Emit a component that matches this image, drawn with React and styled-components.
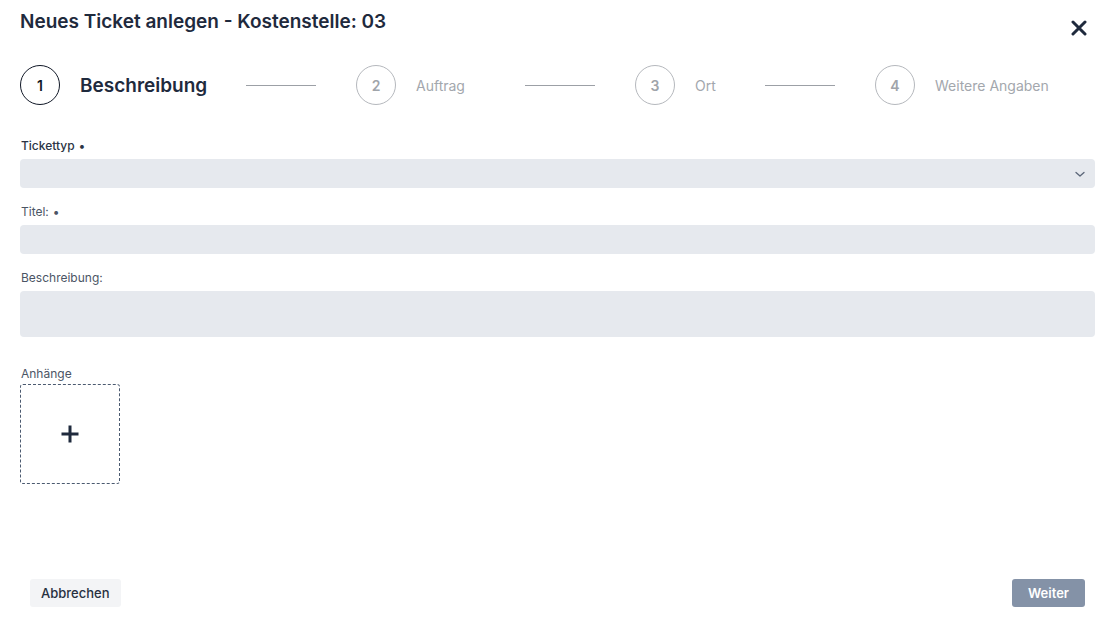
import React from "react";
import styled, { createGlobalStyle } from "styled-components";

const GlobalStyle = createGlobalStyle`
  html, body {
    margin: 0;
    padding: 0;
    background: #ffffff;
    font-family: Inter, "Noto Sans", "Liberation Sans", sans-serif;
  }
  * { box-sizing: border-box; }
`;

const Page = styled.div`
  display: flex;
  flex-direction: column;
  height: 624px;
  padding: 0 20px 17px 20px;
`;

const Header = styled.div`
  display: flex;
  justify-content: space-between;
  align-items: flex-start;
  padding-top: 10px;
`;

const Title = styled.h1`
  margin: 0;
  font-size: 19px;
  line-height: 24px;
  font-weight: 600;
  color: #1f2a3d;
`;

const CloseButton = styled.button`
  border: none;
  background: none;
  padding: 0;
  margin: 10px 8px 0 0;
  width: 16px;
  height: 16px;
  cursor: pointer;
  display: flex;
`;

const Stepper = styled.div`
  display: flex;
  align-items: center;
  margin-top: 29px;
  height: 40px;
`;

const Step = styled.div`
  display: flex;
  align-items: center;
  gap: 20px;
`;

const Circle = styled.div`
  width: 40px;
  height: 40px;
  border-radius: 50%;
  border: 1px solid ${(p) => (p.active ? "#111827" : "#b5b8bd")};
  color: ${(p) => (p.active ? "#111827" : "#a0a4aa")};
  display: flex;
  align-items: center;
  justify-content: center;
  font-size: 14px;
  font-weight: 600;
  flex-shrink: 0;
`;

const StepLabel = styled.span`
  width: ${(p) => p.w}px;
  font-size: ${(p) => (p.active ? "19px" : "14px")};
  font-weight: ${(p) => (p.active ? 600 : 400)};
  color: ${(p) => (p.active ? "#1f2a3d" : "#a3a7ad")};
  white-space: nowrap;
`;

const Connector = styled.div`
  width: 70px;
  height: 1px;
  background: #9ca0a6;
  margin: 0 40px;
`;

const Form = styled.div`
  display: flex;
  flex-direction: column;
  margin-top: 33px;
`;

const Field = styled.div`
  display: flex;
  flex-direction: column;
  gap: ${(p) => p.gap ?? 5}px;
  margin-bottom: ${(p) => p.mb || 16}px;
`;

const Label = styled.label`
  font-size: 12px;
  line-height: 16px;
  font-weight: ${(p) => (p.strong ? 500 : 400)};
  color: ${(p) => (p.strong ? "#2b3445" : "#4b5565")};
  padding-left: 1px;
`;

const Req = styled.span`
  margin-left: 4px;
`;

const Input = styled.div`
  position: relative;
  height: ${(p) => p.h || 29}px;
  background: #e6e9ee;
  border-radius: 4px;
`;

const Chevron = styled.svg`
  position: absolute;
  right: 9px;
  top: 9px;
`;

const Dropzone = styled.div`
  width: 100px;
  height: 100px;
  border: 1px dashed #4b5a70;
  border-radius: 3px;
  display: flex;
  align-items: center;
  justify-content: center;
  cursor: pointer;
`;

const Footer = styled.div`
  margin-top: auto;
  display: flex;
  justify-content: space-between;
  padding: 0 10px;
`;

const Button = styled.button`
  height: 28px;
  padding: 0 ${(p) => (p.primary ? 16 : 11)}px;
  border: none;
  border-radius: 3px;
  font-family: inherit;
  font-size: 13px;
  font-weight: ${(p) => (p.primary ? 600 : 500)};
  background: ${(p) => (p.primary ? "#8492a7" : "#f3f4f6")};
  color: ${(p) => (p.primary ? "#ffffff" : "#27303f")};
  cursor: pointer;
`;

const steps = [
  { n: 1, label: "Beschreibung", w: 126, active: true },
  { n: 2, label: "Auftrag", w: 69 },
  { n: 3, label: "Ort", w: 30 },
  { n: 4, label: "Weitere Angaben", w: 120 },
];

export default function App() {
  return (
    <>
      <GlobalStyle />
      <Page>
        <Header>
          <Title>Neues Ticket anlegen - Kostenstelle: 03</Title>
          <CloseButton aria-label="Schließen">
            <svg width="16" height="16" viewBox="0 0 16 16">
              <path d="M2 2 L14 14 M14 2 L2 14" stroke="#1f2a3d" strokeWidth="3" strokeLinecap="round" />
            </svg>
          </CloseButton>
        </Header>

        <Stepper>
          {steps.map((s, i) => (
            <React.Fragment key={s.n}>
              <Step>
                <Circle active={s.active}>{s.n}</Circle>
                <StepLabel active={s.active} w={s.w}>{s.label}</StepLabel>
              </Step>
              {i < steps.length - 1 && <Connector />}
            </React.Fragment>
          ))}
        </Stepper>

        <Form>
          <Field>
            <Label strong>Tickettyp<Req>•</Req></Label>
            <Input>
              <Chevron width="12" height="12" viewBox="0 0 12 12">
                <path d="M2 4.5 L6 8 L10 4.5" fill="none" stroke="#5b6678" strokeWidth="1.3" strokeLinecap="round" strokeLinejoin="round" />
              </Chevron>
            </Input>
          </Field>
          <Field>
            <Label>Titel:<Req>•</Req></Label>
            <Input />
          </Field>
          <Field mb={29}>
            <Label>Beschreibung:</Label>
            <Input h={46} />
          </Field>
          <Field gap={2}>
            <Label>Anhänge</Label>
            <Dropzone>
              <svg width="20" height="20" viewBox="0 0 20 20">
                <path d="M10 1.5 V18.5 M1.5 10 H18.5" stroke="#1f2a3d" strokeWidth="3" />
              </svg>
            </Dropzone>
          </Field>
        </Form>

        <Footer>
          <Button>Abbrechen</Button>
          <Button primary>Weiter</Button>
        </Footer>
      </Page>
    </>
  );
}
